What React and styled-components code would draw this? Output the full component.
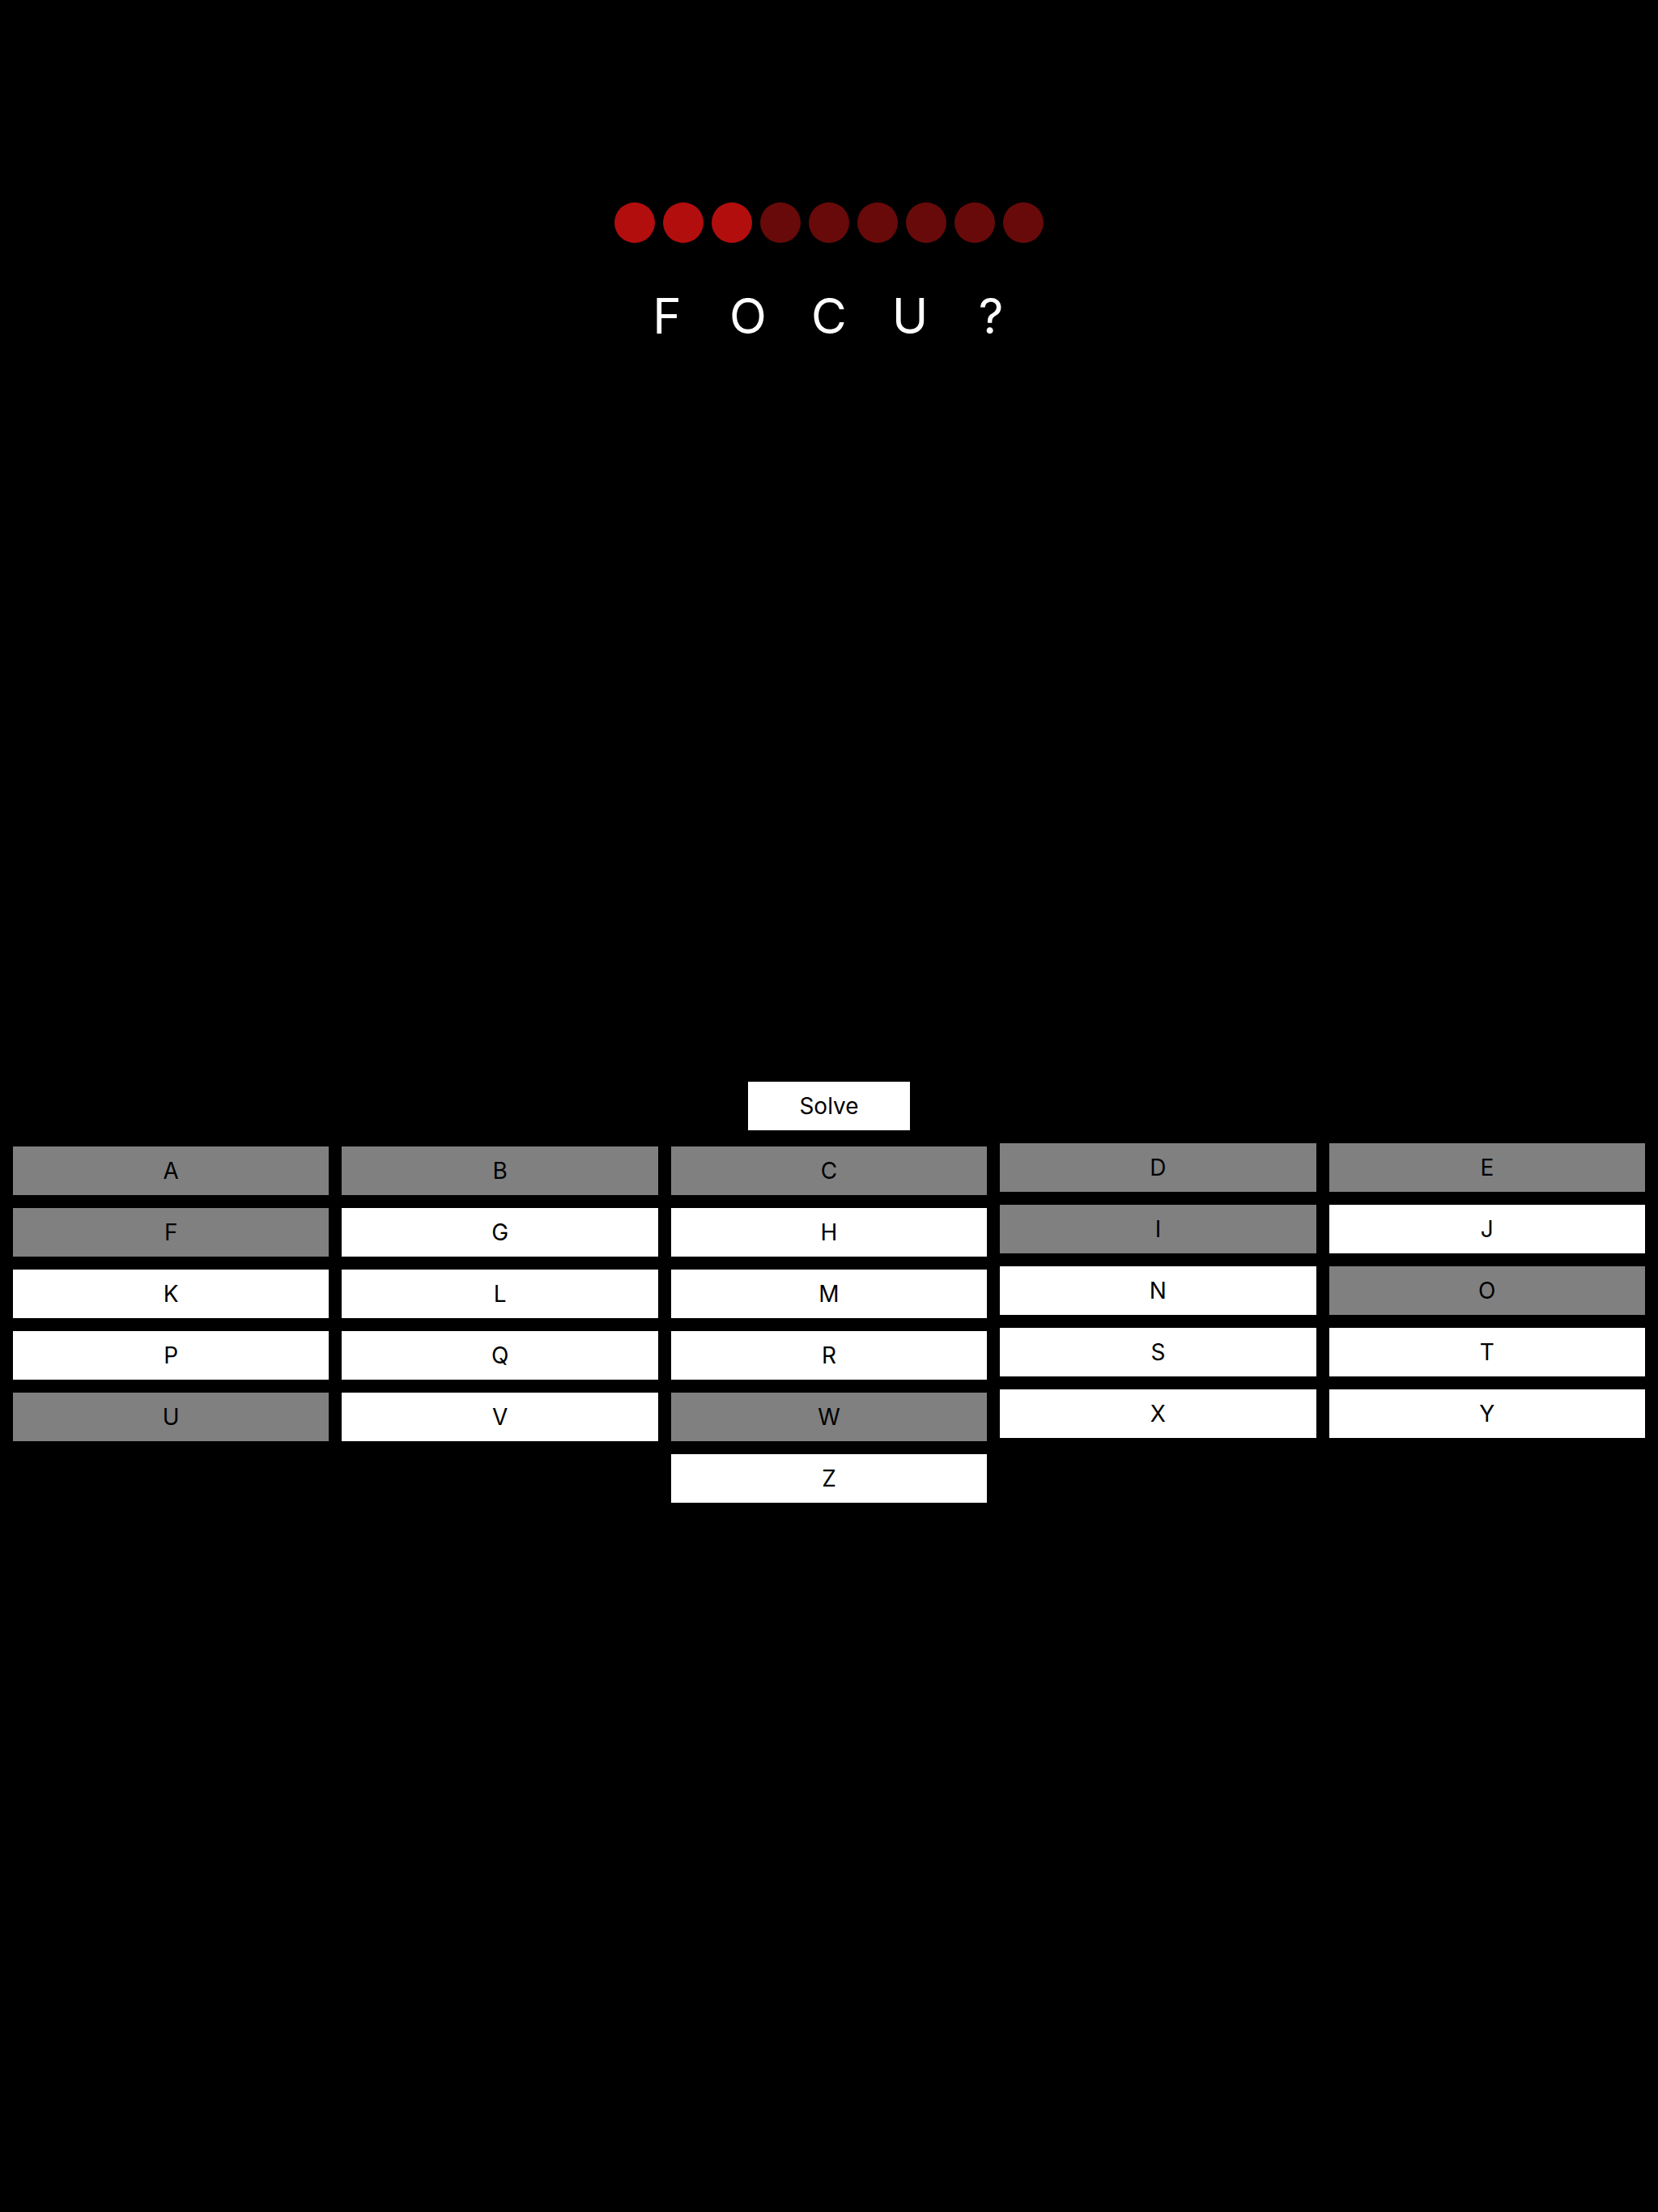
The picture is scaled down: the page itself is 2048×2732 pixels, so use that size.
import React from 'react';
import styled, { createGlobalStyle } from 'styled-components';

// Etat de la partie : lettres déjà essayées (grises) et vies restantes
const TRIED = ['A', 'B', 'C', 'D', 'E', 'F', 'I', 'O', 'U', 'W'];
const WORD = ['F', 'O', 'C', 'U', '?'];
const LIVES = 3;
const TOTAL_LIVES = 9;

const COLUMNS = [
  { letters: ['A', 'F', 'K', 'P', 'U'], lift: false },
  { letters: ['B', 'G', 'L', 'Q', 'V'], lift: false },
  { letters: ['C', 'H', 'M', 'R', 'W', 'Z'], lift: false },
  { letters: ['D', 'I', 'N', 'S', 'X'], lift: true },
  { letters: ['E', 'J', 'O', 'T', 'Y'], lift: true },
];

const App = () => {
  return (
    <>
      <GlobalStyle />
      <Page>
        <Header>
          <Lives>
            {Array.from({ length: TOTAL_LIVES }).map((_, i) => (
              <Life key={i} $active={i < LIVES} />
            ))}
          </Lives>
          <Word>
            {WORD.map((letter, i) => (
              <Letter key={i}>{letter}</Letter>
            ))}
          </Word>
        </Header>

        <SolveButton>Solve</SolveButton>

        <Keyboard>
          {COLUMNS.map((col, i) => (
            <KeyColumn key={i} $lift={col.lift}>
              {col.letters.map((l) => (
                <Key key={l} $tried={TRIED.includes(l)}>
                  {l}
                </Key>
              ))}
            </KeyColumn>
          ))}
        </Keyboard>
      </Page>
    </>
  );
};

const GlobalStyle = createGlobalStyle`
  html, body {
    margin: 0;
    padding: 0;
    background: #000;
  }
  * {
    box-sizing: border-box;
  }
`;

const Page = styled.div`
  min-height: 2732px;
  background: #000;
  font-family: Inter, "Liberation Sans", sans-serif;
  display: flex;
  flex-direction: column;
  align-items: center;
`;

const Header = styled.header`
  height: 1336px;
  padding-top: 250px;
  display: flex;
  flex-direction: column;
  align-items: center;
`;

const Lives = styled.div`
  display: flex;
  gap: 10px;
`;

const Life = styled.span`
  width: 50px;
  height: 50px;
  border-radius: 50%;
  background: ${(p) => (p.$active ? '#b20e0e' : '#680a0a')};
`;

const Word = styled.div`
  display: flex;
  margin-top: 54px;
  color: #fff;
  font-size: 60px;
  font-weight: 400;
`;

const Letter = styled.span`
  width: 100px;
  text-align: center;
`;

const SolveButton = styled.button`
  width: 200px;
  height: 60px;
  border: none;
  background: #fff;
  color: #000;
  font-family: inherit;
  font-size: 28px;
  margin-bottom: 16px;
  cursor: pointer;
`;

const Keyboard = styled.div`
  width: 100%;
  display: flex;
  align-items: flex-start;
  gap: 16px;
  padding: 0 16px;
`;

const KeyColumn = styled.div`
  flex: 1;
  display: flex;
  flex-direction: column;
  gap: 16px;
  margin-top: ${(p) => (p.$lift ? '0' : '4px')};
`;

const Key = styled.button`
  height: 60px;
  border: none;
  background: ${(p) => (p.$tried ? '#808080' : '#fff')};
  color: #000;
  font-family: inherit;
  font-size: 28px;
  cursor: pointer;
`;

export default App;
